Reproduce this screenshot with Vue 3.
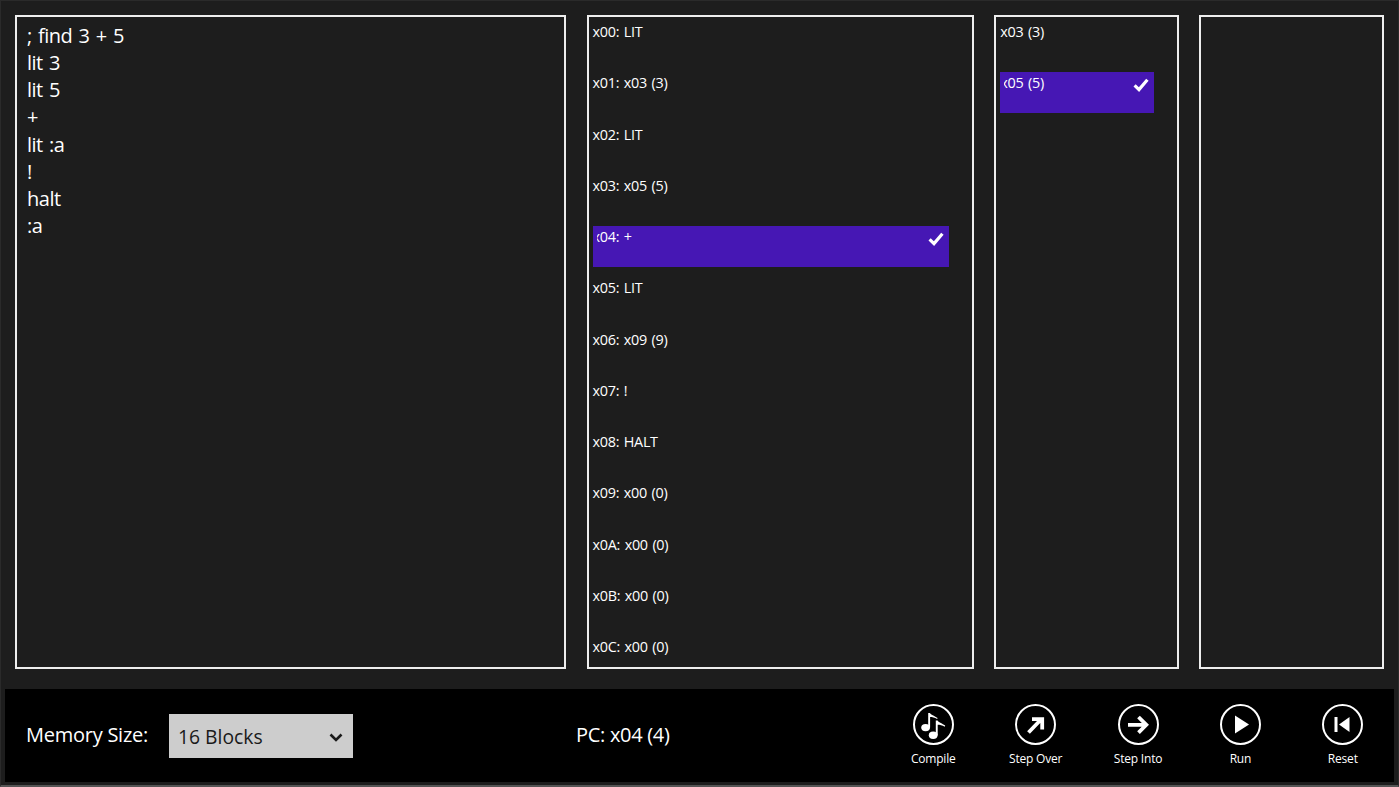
<script setup>
const source = ['; find 3 + 5', 'lit 3', 'lit 5', '+', 'lit :a', '!', 'halt', ':a']
const memory = ['x00: LIT', 'x01: x03 (3)', 'x02: LIT', 'x03: x05 (5)', 'x04: +', 'x05: LIT', 'x06: x09 (9)', 'x07: !', 'x08: HALT', 'x09: x00 (0)', 'x0A: x00 (0)', 'x0B: x00 (0)', 'x0C: x00 (0)']
const stack = ['x03 (3)', 'x05 (5)']
const actions = ['Compile', 'Step Over', 'Step Into', 'Run', 'Reset']
const note = 'M15.2 9h1.8c.9 2.2 4 2.4 7.6 5l-.5 1.1c-2.4-1.5-5-2-7-2V23.6h-1.9z'
</script>

<template>
  <div class="page">
    <main class="panels">
      <section class="panel source">
        <div v-for="line in source" :key="line" class="code">{{ line }}</div>
      </section>
      <section class="panel memory">
        <div v-for="(m, i) in memory" :key="m" class="item" :class="{ selected: i === 4 }">
          <span class="label"><span>{{ m }}</span></span>
          <svg v-if="i === 4" class="check" viewBox="0 0 16 14"><path d="M1.6 7.4 6 11.6 14.4 1.8" /></svg>
        </div>
      </section>
      <section class="panel stack">
        <div v-for="(m, i) in stack" :key="m" class="item" :class="{ selected: i === 1 }">
          <span class="label"><span>{{ m }}</span></span>
          <svg v-if="i === 1" class="check" viewBox="0 0 16 14"><path d="M1.6 7.4 6 11.6 14.4 1.8" /></svg>
        </div>
      </section>
      <section class="panel rstack"></section>
    </main>
    <footer class="bar">
      <span class="mem-label">Memory Size:</span>
      <div class="select">
        <span>16 Blocks</span>
        <svg class="chev" viewBox="0 0 14 9"><path d="M1.5 1.5 7 7l5.5-5.5" /></svg>
      </div>
      <span class="pc">PC: x04 (4)</span>
      <div class="actions">
        <button v-for="a in actions" :key="a" class="action">
          <svg class="ring" viewBox="0 0 41 41">
            <circle cx="20.5" cy="20.5" r="19.5" class="o" />
            <g v-if="a === 'Compile'" fill="#fff">
              <ellipse cx="12.6" cy="23.6" rx="4.4" ry="3.7" />
              <path :d="note" />
              <g transform="translate(7.6 7.6)">
                <ellipse cx="12.6" cy="23.6" rx="4.4" ry="3.7" />
                <path :d="note" />
              </g>
            </g>
            <path v-else-if="a === 'Step Over'" d="M13.5 28.5 26.5 15M17 15.2h10.2V25.5" class="s" />
            <path v-else-if="a === 'Step Into'" d="M10 20.8h17.5M20.5 13l7.8 7.8-7.8 7.8" class="s" />
            <path v-else-if="a === 'Run'" d="M15 11.5 29 20.5 15 29.5z" fill="#fff" />
            <g v-else fill="#fff">
              <rect x="12.5" y="13" width="3" height="15" />
              <path d="M27.5 13v15L17 20.5z" />
            </g>
          </svg>
          <span>{{ a }}</span>
        </button>
      </div>
    </footer>
  </div>
</template>

<style>
html, body { margin: 0; background: #1d1d1d; overflow: hidden; }
</style>

<style scoped>
.page {
  width: 1399px;
  height: 787px;
  box-sizing: border-box;
  background: #1d1d1d;
  color: #fff;
  font-family: "Open Sans", "Noto Sans", sans-serif;
  border: 1px solid #2a2a2a;
  border-bottom: 2px solid #555;
  padding: 14px 4px 0;
  display: flex;
  flex-direction: column;
}
.panels {
  display: flex;
  height: 654px;
  padding: 0 10px;
}
.panel {
  box-sizing: border-box;
  border: 2px solid #eee;
  height: 100%;
  overflow: hidden;
  padding: 4px;
}
.source { width: 551px; padding: 5px 10px; margin-right: 21px; }
.memory { width: 388px; margin-right: 20px; }
.stack { width: 185px; margin-right: 20px; }
.rstack { width: 185px; }
.code {
  font-size: 20px;
  line-height: 27.15px;
  letter-spacing: -.5px;
  word-spacing: 1.6px;
  white-space: pre;
}
.item {
  height: 41px;
  margin-bottom: 10.25px;
  position: relative;
  font-size: 14.4px;
  letter-spacing: -.3px;
  word-spacing: 1.2px;
  line-height: 22.5px;
}
.memory .item { width: 356px; }
.stack .item { width: 154px; }
.selected { background: #4617b4; }
.label { display: block; }
.selected .label { overflow: hidden; margin-left: 4px; }
.selected .label span { display: block; margin-left: -4px; }
.check {
  position: absolute;
  right: 5px;
  top: 6px;
  width: 16px;
  height: 14px;
  fill: none;
  stroke: #fff;
  stroke-width: 3.2;
}
.bar {
  margin-top: 20px;
  height: 93px;
  background: #000;
  display: flex;
  align-items: center;
}
.mem-label { margin: 0 0 2px 21px; font-size: 20px; letter-spacing: -.25px; }
.select {
  margin-left: 21px;
  width: 184px;
  height: 44px;
  box-sizing: border-box;
  background: #cdcdcd;
  color: #1a1a1a;
  font-size: 19.3px;
  padding: 2px 10px 0 9px;
  display: flex;
  align-items: center;
  justify-content: space-between;
}
.chev { width: 14px; height: 9px; margin-top: 2px; fill: none; stroke: #1a1a1a; stroke-width: 2.6; }
.pc { margin: 0 0 2px 223px; font-size: 20px; letter-spacing: -.3px; }
.actions { margin-left: auto; display: flex; }
.action {
  width: 102.4px;
  background: none;
  border: 0;
  color: #fff;
  padding: 0;
  font: inherit;
  font-size: 12px;
  letter-spacing: -.2px;
  display: flex;
  flex-direction: column;
  align-items: center;
  gap: 5px;
}
.ring { width: 41px; height: 41px; }
.o { fill: none; stroke: #fff; stroke-width: 2; }
.s { fill: none; stroke: #fff; stroke-width: 3.8; }
</style>
